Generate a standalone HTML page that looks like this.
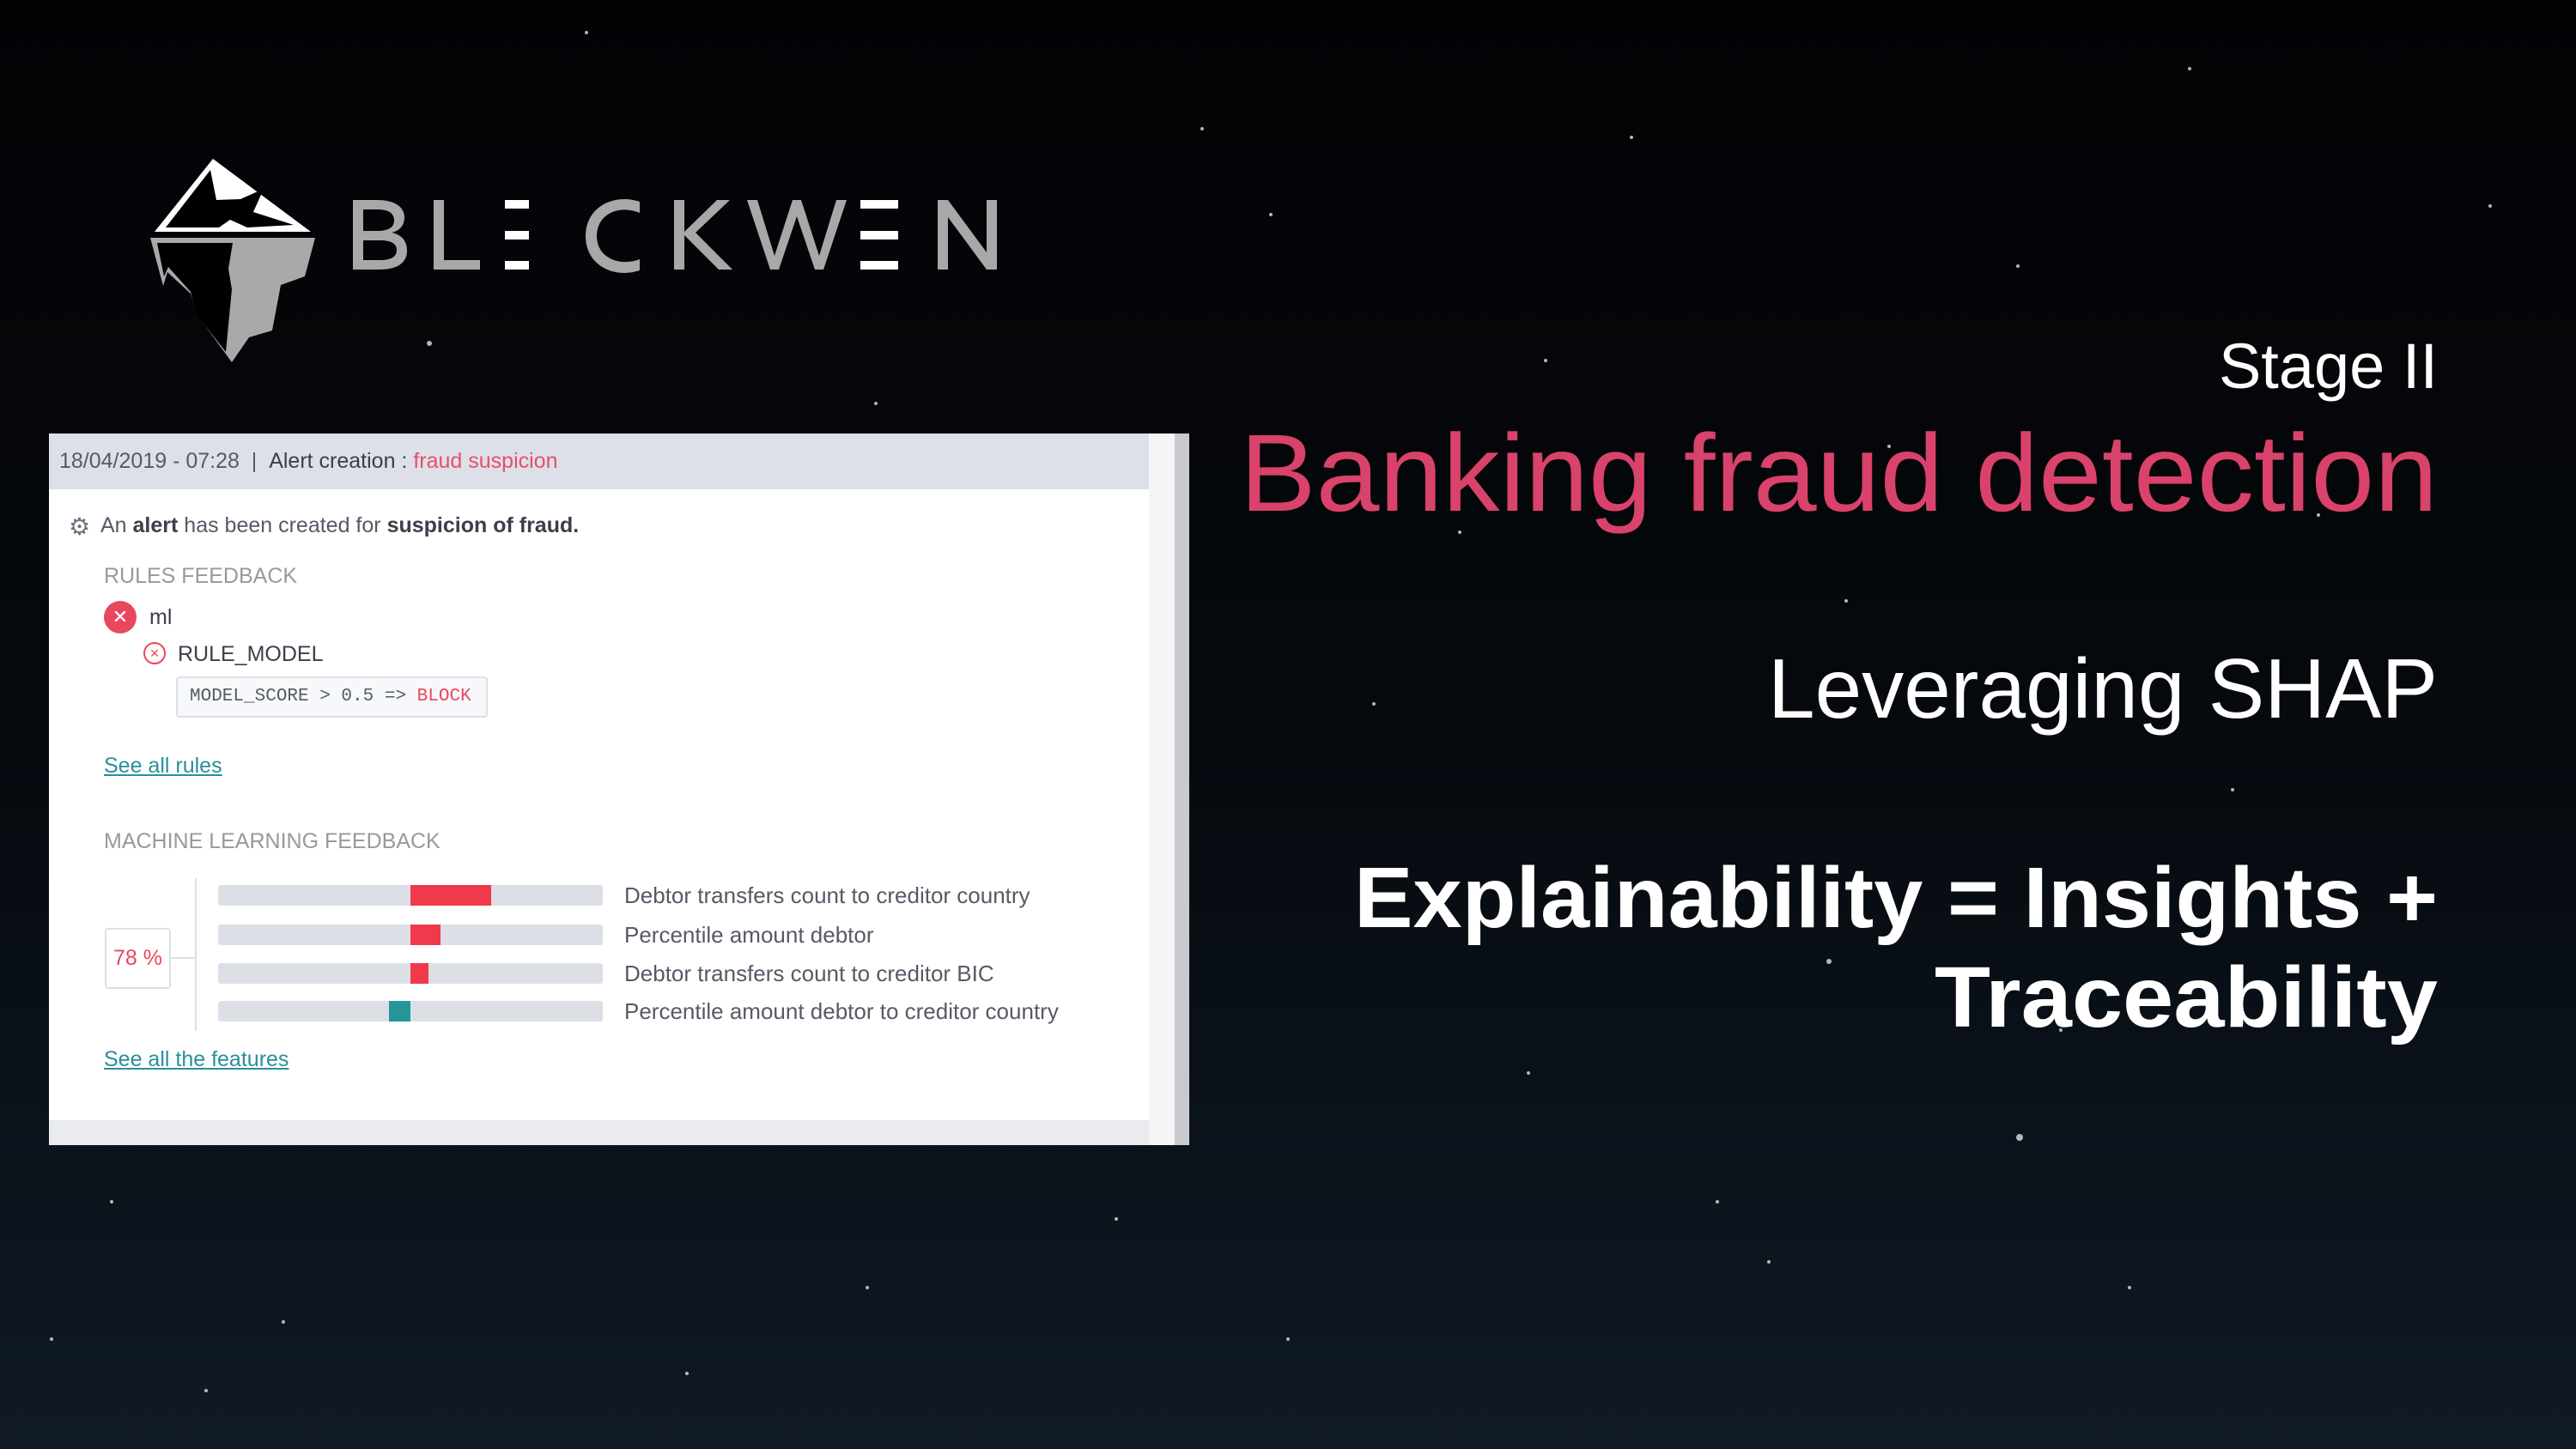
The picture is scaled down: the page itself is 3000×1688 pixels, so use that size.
<!DOCTYPE html>
<html><head><meta charset="utf-8"><style>
*{margin:0;padding:0;box-sizing:border-box}
body{width:3000px;height:1688px;overflow:hidden;background:linear-gradient(180deg,#020305 0%,#05080c 45%,#0a1119 75%,#101a25 100%);font-family:"Liberation Sans",sans-serif;position:relative}
.a{position:absolute;white-space:nowrap}
.p{color:#555a66;font-size:25px}
.bar{position:absolute;left:254px;width:448px;height:24px;background:#dcdfe6;border-radius:3px}
.seg{position:absolute;top:0;height:24px}
.lab{position:absolute;left:727px;font-size:26px;color:#555a66;white-space:nowrap}
a{color:#2a8f9a;text-decoration:underline}
</style></head><body>
<svg class="a" style="left:0;top:0" width="3000" height="1688">
<g fill="#fff" opacity="0.7">
<circle cx="683" cy="38" r="2"/><circle cx="1480" cy="250" r="2"/><circle cx="2350" cy="310" r="2"/><circle cx="2900" cy="240" r="2"/><circle cx="1800" cy="420" r="2"/><circle cx="2150" cy="700" r="2"/><circle cx="1600" cy="820" r="2"/><circle cx="2600" cy="920" r="2"/><circle cx="2130" cy="1120" r="3"/><circle cx="1780" cy="1250" r="2"/><circle cx="2352" cy="1325" r="4"/><circle cx="2000" cy="1400" r="2"/><circle cx="2480" cy="1500" r="2"/><circle cx="1500" cy="1560" r="2"/><circle cx="1300" cy="1420" r="2"/><circle cx="800" cy="1600" r="2"/><circle cx="240" cy="1620" r="2"/><circle cx="60" cy="1560" r="2"/><circle cx="500" cy="400" r="3"/><circle cx="1020" cy="470" r="2"/><circle cx="1150" cy="310" r="2"/><circle cx="2700" cy="600" r="2"/><circle cx="2820" cy="1050" r="2"/><circle cx="1900" cy="160" r="2"/><circle cx="2200" cy="520" r="2"/><circle cx="1650" cy="1030" r="2"/><circle cx="2060" cy="1470" r="2"/><circle cx="1010" cy="1500" r="2"/><circle cx="330" cy="1540" r="2"/><circle cx="130" cy="1400" r="2"/><circle cx="2400" cy="1200" r="2"/><circle cx="1700" cy="620" r="2"/><circle cx="1400" cy="150" r="2"/><circle cx="2550" cy="80" r="2"/>
</g>
<!-- logo -->
<polygon points="248,185 180,270 362,270" fill="#fff"/>
<polygon points="193,265 245,198 252,233 280,232 307,220 295,247 342,262 288,265 268,256 255,265" fill="#000"/>
<polygon points="175,277 367,277 355,322 327,332 317,385 290,393 270,422 232,370 222,342 195,317 190,333" fill="#a9a9a9"/>
<polygon points="183,283 271,283 266,313 270,337 263,410 230,368 222,340 196,311 191,322" fill="#000"/>
<g fill="#a8a8a8">
<path d="M411 233h28c22 0 32 9 32 20 0 10-6 16-15 18 11 2 18 9 18 21 0 14-11 22-32 22h-31zm12 11v25h16c13 0 20-4 20-12 0-9-7-13-20-13zm0 36v23h19c14 0 20-4 20-12 0-7-6-11-20-11z"/>
<path d="M505 233h12v70h42v11h-54z"/>
<path d="M745 235c-30-10-63 6-63 40 0 34 33 50 63 40v-13c-24 9-50-2-50-27 0-26 26-37 50-27z"/>
<path d="M785 233h12v37l38-37h15l-40 38 43 43h-16l-40-40v40h-12z"/>
<path d="M870 233h12l20 65 21-65h10l21 65 20-65h12l-27 81h-10l-21-62-21 62h-10z"/>
<path d="M1092 233h12l45 61v-61h12v81h-12l-45-61v61h-12z"/>
</g>
<g fill="#fff"><rect x="588" y="233" width="28" height="10"/><rect x="588" y="269" width="28" height="10"/><rect x="588" y="304" width="28" height="10"/><rect x="1002" y="233" width="44" height="10"/><rect x="1002" y="269" width="44" height="10"/><rect x="1002" y="304" width="44" height="10"/></g>
<!-- right text -->
<text x="2839" y="452" text-anchor="end" font-family="Liberation Sans" font-size="74" fill="#fff">Stage II</text>
<text x="2839" y="595" text-anchor="end" font-family="Liberation Sans" font-size="128" fill="#d9426a" textLength="1395" lengthAdjust="spacingAndGlyphs">Banking fraud detection</text>
<text x="2839" y="836" text-anchor="end" font-family="Liberation Sans" font-size="98" fill="#fff" textLength="780" lengthAdjust="spacingAndGlyphs">Leveraging SHAP</text>
<text x="2839" y="1080" text-anchor="end" font-family="Liberation Sans" font-weight="bold" font-size="100" fill="#fff" textLength="1262" lengthAdjust="spacingAndGlyphs">Explainability = Insights +</text>
<text x="2839" y="1196" text-anchor="end" font-family="Liberation Sans" font-weight="bold" font-size="100" fill="#fff" textLength="586" lengthAdjust="spacingAndGlyphs">Traceability</text>
</svg>
<!-- panel -->
<div class="a" style="left:57px;top:505px;width:1328px;height:829px;background:#fff"></div>
<div class="a" style="left:57px;top:505px;width:1281px;height:65px;background:#dde0e8"></div>
<div class="a" style="left:1338px;top:505px;width:30px;height:829px;background:#f4f5f7"></div>
<div class="a" style="left:1368px;top:505px;width:17px;height:829px;background:#c9cace"></div>
<div class="a" style="left:57px;top:1305px;width:1281px;height:29px;background:#e9ebef"></div>
<div class="a p" style="left:69px;top:523px">18/04/2019 - 07:28 &nbsp;| &nbsp;<b style="color:#3a3f4a;font-weight:normal">Alert creation : </b><span style="color:#e84f6a">fraud suspicion</span></div>
<div class="a" style="left:80px;top:597px;font-size:28px;color:#6a7080">⚙</div>
<div class="a p" style="left:117px;top:598px">An <b style="color:#3a3f4a">alert</b> has been created for <b style="color:#3a3f4a">suspicion of fraud.</b></div>
<div class="a" style="left:121px;top:657px;font-size:25px;color:#999">RULES FEEDBACK</div>
<div class="a" style="left:121px;top:700px;width:38px;height:38px;border-radius:50%;background:#e8485e;color:#fff;font-size:22px;text-align:center;line-height:38px">✕</div>
<div class="a p" style="left:174px;top:705px;color:#3a3f4a">ml</div>
<div class="a" style="left:167px;top:748px;width:26px;height:26px;border-radius:50%;border:2px solid #e8485e;color:#e8485e;font-size:14px;text-align:center;line-height:22px">✕</div>
<div class="a p" style="left:207px;top:748px;color:#3a3f4a">RULE_MODEL</div>
<div class="a" style="left:205px;top:788px;width:363px;height:48px;border:2px solid #dde0e8;border-radius:4px;background:#f7f8fa;font-family:'Liberation Mono',monospace;font-size:21px;color:#555a66;line-height:44px;padding-left:14px">MODEL_SCORE &gt; 0.5 =&gt; <span style="color:#e8485e">BLOCK</span></div>
<div class="a" style="left:121px;top:878px;font-size:25px"><a>See all rules</a></div>
<div class="a" style="left:121px;top:966px;font-size:25px;color:#999">MACHINE LEARNING FEEDBACK</div>
<div class="a" style="left:122px;top:1081px;width:77px;height:71px;border:2px solid #dde0e8;border-radius:4px;color:#e8485e;font-size:25px;text-align:center;line-height:67px">78 %</div>
<div class="a" style="left:199px;top:1115px;width:29px;height:2px;background:#dde0e8"></div>
<div class="a" style="left:227px;top:1023px;width:2px;height:178px;background:#dde0e8"></div>
<div class="bar" style="top:1031px"><div class="seg" style="left:224px;width:94px;background:#f0394a"></div></div>
<div class="bar" style="top:1077px"><div class="seg" style="left:224px;width:35px;background:#f0394a"></div></div>
<div class="bar" style="top:1122px"><div class="seg" style="left:224px;width:21px;background:#f0394a"></div></div>
<div class="bar" style="top:1166px"><div class="seg" style="left:199px;width:25px;background:#24969a"></div></div>
<div class="lab" style="top:1028px">Debtor transfers count to creditor country</div>
<div class="lab" style="top:1074px">Percentile amount debtor</div>
<div class="lab" style="top:1119px">Debtor transfers count to creditor BIC</div>
<div class="lab" style="top:1163px">Percentile amount debtor to creditor country</div>
<div class="a" style="left:121px;top:1220px;font-size:25px"><a>See all the features</a></div>
</body></html>
